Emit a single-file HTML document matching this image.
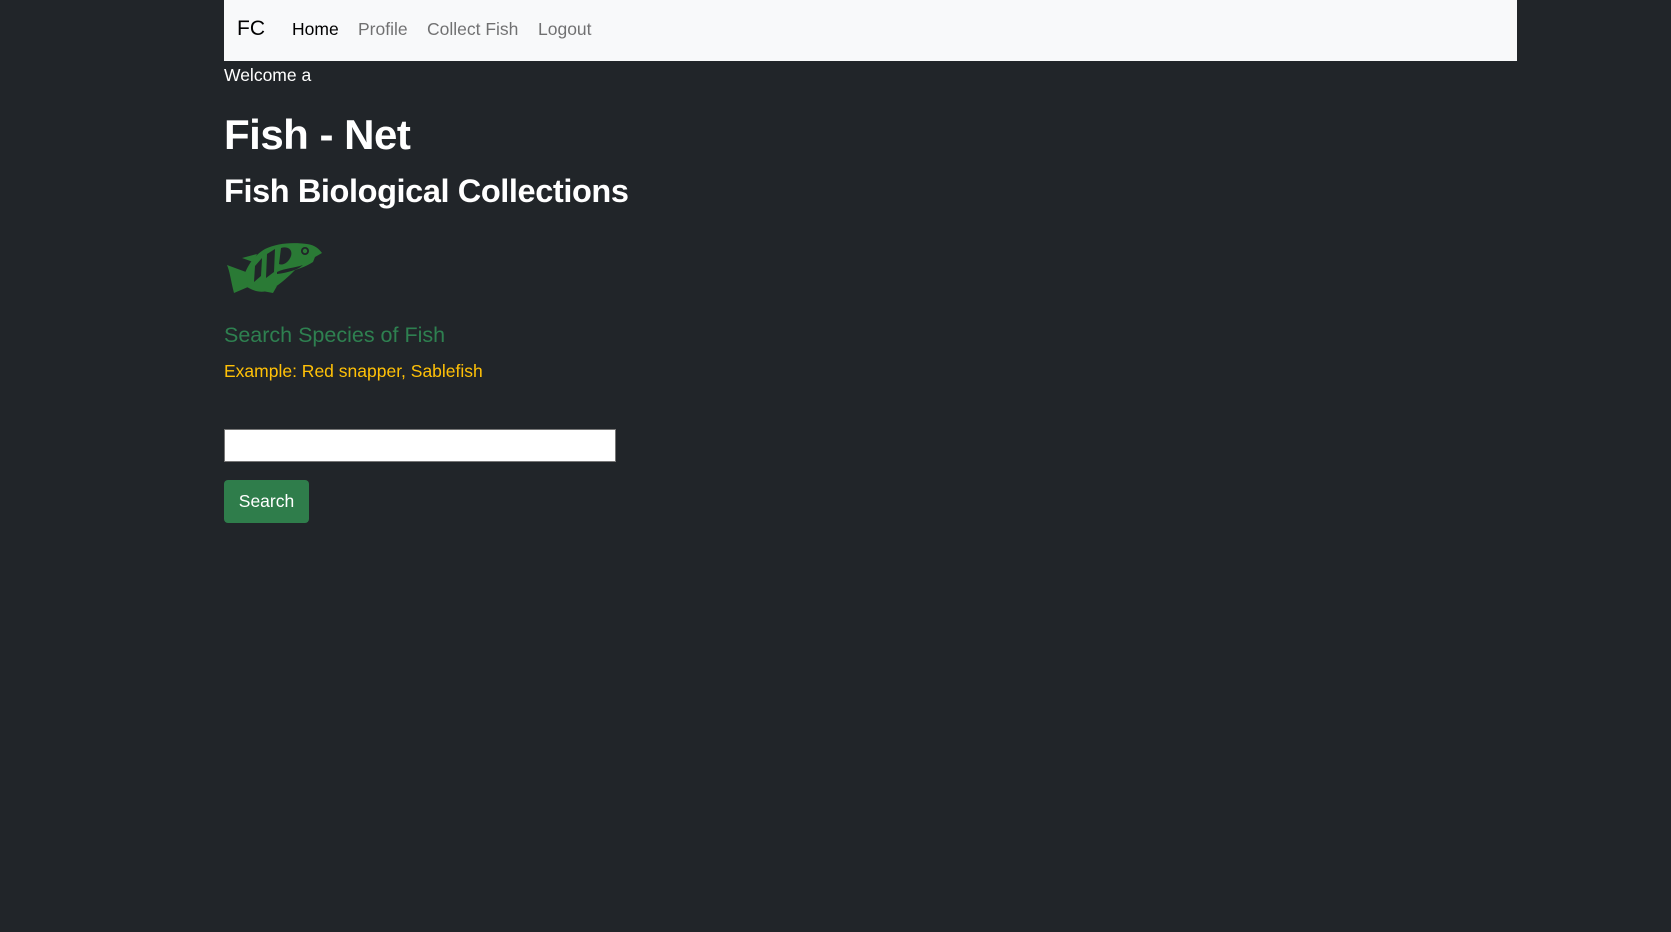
<!DOCTYPE html>
<html><head><meta charset="utf-8"><style>
body{margin:0;background:#212529;font-family:"Liberation Sans",sans-serif;color:#fff;width:1671px;height:932px;overflow:hidden}
.nav{position:absolute;left:224px;top:0;width:1293px;height:61px;background:#f8f9fa}
.nav span{position:absolute;top:19px;font-size:17.5px;color:rgba(0,0,0,.55)}
.t{position:absolute;left:224px;white-space:nowrap}
</style></head><body>
<div class="nav">
<span style="left:13px;top:17px;font-size:21px;color:#000">FC</span>
<span style="left:68px;color:#000">Home</span>
<span style="left:134px">Profile</span>
<span style="left:203px">Collect Fish</span>
<span style="left:314px">Logout</span>
</div>
<div class="t" style="top:65px;font-size:17.5px">Welcome a</div>
<div class="t" style="top:111px;font-size:42px;font-weight:bold;letter-spacing:-0.5px">Fish - Net</div>
<div class="t" style="top:173px;font-size:32.5px;font-weight:bold;letter-spacing:-0.4px">Fish Biological Collections</div>
<svg style="position:absolute;left:224px;top:241px" width="100" height="55" viewBox="9 11 100 55">
<g fill="#2a7a35">
<path d="M30 43 C34 33 40 25 50 19 C62 13 78 12 92 14 C100 15 104 19 107 23 L100 27 L98 32 C92 36 86 38 80 40 C74 46 66 54 55 60 C48 63 40 62 32 57 Z"/>
<path d="M31 42 L12 35 C15 42 16 52 19 63 L33 57 Z"/>
<path d="M42 60 L58 63 L62 56 Z"/>
<path d="M27 28 L42 24 L38 32 Z"/>
</g>
<g fill="#212529">
<path d="M40 36 L47 28 L46 46 L39 52 Z"/>
<path d="M52 24 L60 19 L59 42 L51 48 Z"/>
<path d="M66 18 C72 16 78 19 76 26 C74 32 68 36 64 34 Z"/>
<path d="M62 42 C70 38 80 38 88 35 L84 38 C78 41 70 43 62 44 Z"/>
<ellipse cx="90" cy="21" rx="4" ry="4"/>
</g>
<circle cx="90" cy="21" r="2.2" fill="#2a7a35"/>
</svg>
<div class="t" style="top:323px;font-size:21.5px;color:#2e8050">Search Species of Fish</div>
<div class="t" style="top:361px;font-size:17.5px;color:#ffc107">Example: Red snapper, Sablefish</div>
<div style="position:absolute;left:224px;top:429px;width:390px;height:31px;background:#fff;border:1px solid #767676"></div>
<div style="position:absolute;left:224px;top:480px;width:85px;height:43px;background:#2f7d4b;border-radius:4px;font-size:17.5px;line-height:43px;text-align:center">Search</div>
</body></html>
